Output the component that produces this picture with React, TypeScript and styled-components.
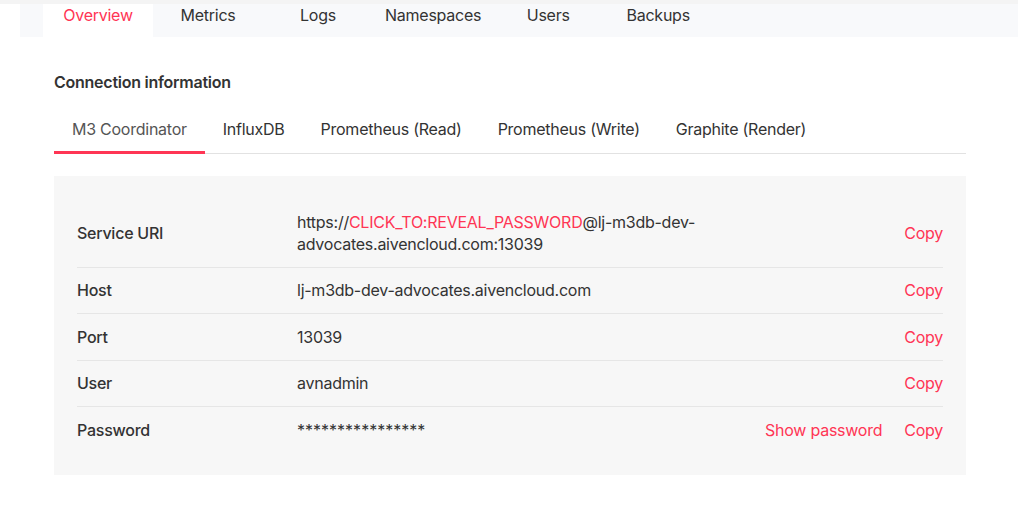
import React from "react";
import styled, { createGlobalStyle } from "styled-components";

const Global = createGlobalStyle`
  html, body { margin: 0; padding: 0; background: #ffffff; }
  body {
    font-family: Inter, "Noto Sans", sans-serif;
    color: #333333;
    letter-spacing: -0.25px;
    -webkit-font-smoothing: antialiased;
  }
  * { box-sizing: border-box; }
`;

const RED = "#ff3554";

const Page = styled.div`
  width: 1018px;
  min-height: 508px;
  background: #ffffff;
`;

const TopStrip = styled.div`
  height: 4px;
  background: #f4f4f4;
`;

const NavBar = styled.nav`
  margin-left: 20px;
  height: 33px;
  display: flex;
  padding-left: 23px;
  background: #f8f9fb;
`;

const NavTab = styled.div<{ $active?: boolean }>`
  min-width: 110px;
  padding: 0 12px;
  text-align: center;
  font-size: 16px;
  line-height: 22px;
  color: ${(p) => (p.$active ? RED : "#333333")};
  background: ${(p) => (p.$active ? "#ffffff" : "transparent")};
`;

const Main = styled.main`
  margin-left: 54px;
  width: 912px;
  padding-top: 33px;
`;

const Heading = styled.h2`
  margin: 0;
  font-size: 16px;
  line-height: 24px;
  font-weight: 600;
  color: #333333;
`;

const SubTabs = styled.div`
  margin-top: 23px;
  display: flex;
  border-bottom: 1px solid #e2e2e2;
`;

const SubTab = styled.div<{ $active?: boolean }>`
  padding: 0 18px 10px;
  margin-bottom: -1px;
  font-size: 16px;
  line-height: 24px;
  color: ${(p) => (p.$active ? "#555555" : "#333333")};
  border-bottom: 3px solid ${(p) => (p.$active ? RED : "transparent")};
`;

const Panel = styled.section`
  margin-top: 22px;
  background: #f7f7f7;
  padding: 23px;
`;

const Row = styled.div<{ $first?: boolean }>`
  display: grid;
  grid-template-columns: 220px 1fr auto;
  align-items: center;
  padding: 11.5px 0;
  border-top: ${(p) => (p.$first ? "none" : "1px solid #e6e6e6")};
  font-size: 16px;
  line-height: 22.4px;
`;

const Label = styled.div`
  font-weight: 500;
  color: #333333;
`;

const Value = styled.div`
  max-width: 440px;
  color: #333333;
`;

const Masked = styled.span`
  letter-spacing: 0;
`;

const Red = styled.span`
  color: ${RED};
`;

const Actions = styled.div`
  display: flex;
  gap: 22px;
`;

const Action = styled.span`
  color: ${RED};
  cursor: pointer;
`;

const navTabs = ["Overview", "Metrics", "Logs", "Namespaces", "Users", "Backups"];
const subTabs = [
  "M3 Coordinator",
  "InfluxDB",
  "Prometheus (Read)",
  "Prometheus (Write)",
  "Graphite (Render)",
];

type RowData = { label: string; value: React.ReactNode; extra?: string };

const rows: RowData[] = [
  {
    label: "Service URI",
    value: (
      <>
        https://<Red>CLICK_TO:REVEAL_PASSWORD</Red>@lj-m3db-dev-advocates.aivencloud.com:13039
      </>
    ),
  },
  { label: "Host", value: "lj-m3db-dev-advocates.aivencloud.com" },
  { label: "Port", value: "13039" },
  { label: "User", value: "avnadmin" },
  { label: "Password", value: <Masked>****************</Masked>, extra: "Show password" },
];

export default function App() {
  return (
    <Page>
      <Global />
      <TopStrip />
      <NavBar>
        {navTabs.map((t, i) => (
          <NavTab key={t} $active={i === 0}>
            {t}
          </NavTab>
        ))}
      </NavBar>
      <Main>
        <Heading>Connection information</Heading>
        <SubTabs>
          {subTabs.map((t, i) => (
            <SubTab key={t} $active={i === 0}>
              {t}
            </SubTab>
          ))}
        </SubTabs>
        <Panel>
          {rows.map((r, i) => (
            <Row key={r.label} $first={i === 0}>
              <Label>{r.label}</Label>
              <Value>{r.value}</Value>
              <Actions>
                {r.extra && <Action>{r.extra}</Action>}
                <Action>Copy</Action>
              </Actions>
            </Row>
          ))}
        </Panel>
      </Main>
    </Page>
  );
}
